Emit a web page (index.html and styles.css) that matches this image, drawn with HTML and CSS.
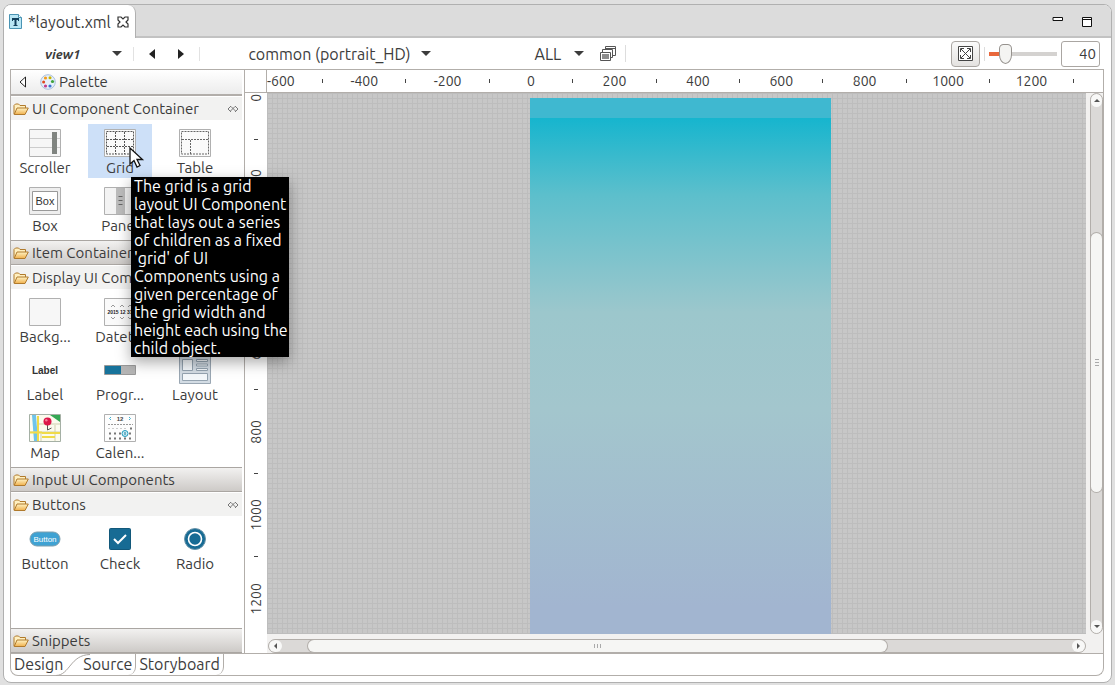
FILE: index.html
```html
<!DOCTYPE html>
<html lang="en">
<head>
<meta charset="utf-8">
<title>layout.xml</title>
<link rel="stylesheet" href="styles.css">
</head>
<body>
<svg class="defs" width="0" height="0" aria-hidden="true">
  <defs>
    <linearGradient id="folder-fill" x1="0" y1="0" x2="0" y2="1"><stop offset="0" stop-color="#fff3c4"/><stop offset="1" stop-color="#f0b04c"/></linearGradient>
    <symbol id="folder" viewBox="0 0 16 14">
      <path d="M1 12V3.5L2.500 2h3L7 3.500h5.500V6" fill="#fff0c0" stroke="#b07a2c"/>
      <path d="M1.200 12.500L4 6h11.300L12 12.500z" fill="url(#folder-fill)" stroke="#b07a2c"/>
    </symbol>
    <symbol id="pin" viewBox="0 0 12 10">
      <path d="M4 2L1 5l3 3M8 2l3 3-3 3M4 2.500L8.500 7M8 2.500L3.500 7" fill="none" stroke="#777"/>
    </symbol>
  </defs>
</svg>
<div class="window">
  <header class="tabbar">
    <div class="file-tab">
      <svg width="13" height="15" viewBox="0 0 13 15"><path d="M.5.5h9l3 3v11H.5z" fill="#b9e6f5" stroke="#4a94b4"/><path d="M9.500.5v3h3" fill="#fff" stroke="#4a94b4"/><path d="M3 5h7M6.500 5v7" stroke="#123f5c" stroke-width="2" fill="none"/><path d="M3.500 4v3M9.500 4v3M4.500 11.500h4" stroke="#123f5c"/></svg>
      <span>*layout.xml</span>
      <button class="plain" aria-label="Close"><svg width="12" height="12" viewBox="0 0 12 12"><path d="M1 1h3l2 2 2-2h3v3L9 6l2 2v3H8L6 9l-2 2H1V8l2-2-2-2z" fill="#fff" stroke="#333" stroke-width="1.200"/></svg></button>
    </div>
    <div class="window-buttons">
      <button class="plain" aria-label="Minimize"><svg width="12" height="12" viewBox="0 0 12 12"><path d="M1 1.500h9.500v3H1z" fill="#fff" stroke="#111"/></svg></button>
      <button class="plain" aria-label="Maximize"><svg width="12" height="12" viewBox="0 0 12 12"><path d="M1.500 1.500h9v9h-9zM1.500 3.500h9" fill="#fff" stroke="#111"/></svg></button>
    </div>
  </header>

  <div class="toolbar">
    <button class="plain pick view-pick"><b>view1</b><i class="caret"></i></button>
    <div class="nav">
      <button class="plain" aria-label="Previous view"><i class="arrow-left"></i></button>
      <button class="plain" aria-label="Next view"><i class="arrow-right"></i></button>
    </div>
    <button class="plain pick">common (portrait_HD)<i class="caret"></i></button>
    <button class="plain pick all-pick">ALL<i class="caret"></i></button>
    <button class="plain layers" aria-label="Screens"><svg width="18" height="17" viewBox="0 0 18 17"><path d="M6.500 1.500h10v9h-10z" fill="#fff" stroke="#555"/><path d="M7 3.500h9" stroke="#555"/><path d="M3.500 4.500h10v8h-10z" fill="#fff" stroke="#555"/><path d="M1.500 7.500h10v8h-10z" fill="#fff" stroke="#555"/><path d="M3 9h7v5H3z" fill="#8c8c8c"/></svg></button>
    <div class="zoom">
      <button class="fit" aria-label="Fit to window"><svg width="15" height="15" viewBox="0 0 15 15"><path d="M.5.5h14v14H.5z" fill="#fff" stroke="#444"/><path d="M3 3l9 9M12 3l-9 9M2.500 6V2.500H6M9 2.500h3.500V6M12.500 9v3.500H9M6 12.500H2.500V9" fill="none" stroke="#444"/></svg></button>
      <span class="rule"></span>
      <input class="slider" type="range" min="0" max="100" value="18" aria-label="Zoom">
      <input class="percent" type="text" value="40" aria-label="Zoom percent">
    </div>
  </div>

  <main class="editor">
    <aside class="palette">
      <div class="palette-head">
        <button class="plain" aria-label="Collapse palette"><svg width="8" height="12" viewBox="0 0 8 12"><path d="M6.500 1v10L1 6z" fill="#fff" stroke="#222"/></svg></button>
        <svg width="16" height="16" viewBox="0 0 16 16"><circle cx="8" cy="8" r="7.300" fill="#e6f0fa" stroke="#a9bfdc"/><circle cx="5.500" cy="4" r="1.600" fill="#f29a1c"/><circle cx="10" cy="3.800" r="1.500" fill="#c8b400"/><circle cx="3.600" cy="8" r="1.500" fill="#e0481c"/><circle cx="12.500" cy="7.500" r="1.600" fill="#3fa33c"/><circle cx="5.500" cy="12" r="1.600" fill="#c13b8c"/><circle cx="10" cy="12" r="1.600" fill="#3b74d0"/></svg>
        <span>Palette</span>
      </div>

      <button class="drawer open"><svg width="16" height="14"><use href="#folder"/></svg><span>UI Component Container</span><svg class="pin" width="12" height="10"><use href="#pin"/></svg></button>
      <div class="items">
        <button class="item"><svg width="32" height="28" viewBox="0 0 32 28"><path d="M.5.5h31v27H.5z" fill="#f6f6f6" stroke="#b0b0b0"/><path d="M1 9.500h30M1 18.500h30" stroke="#ccc"/><path d="M23 3h5v22h-5z" fill="#808480"/></svg><span>Scroller</span></button>
        <button class="item selected"><svg width="32" height="28" viewBox="0 0 32 28"><path d="M.5.5h31v27H.5z" fill="#fafafa" stroke="#b0b0b0"/><path d="M2.500 2.500h27v22.500h-27zM11.500 3v22M20.500 3v22M3 10.500h27M3 17.500h27" fill="none" stroke="#555" stroke-dasharray="2 1"/></svg><span>Grid</span></button>
        <button class="item"><svg width="32" height="28" viewBox="0 0 32 28"><path d="M.5.5h31v27H.5z" fill="#fafafa" stroke="#b0b0b0"/><path d="M2.500 2.500h27v22.500h-27zM11.500 11v14M3 10.500h27" fill="none" stroke="#666" stroke-dasharray="2 1"/></svg><span>Table</span></button>
        <button class="item"><svg width="32" height="28" viewBox="0 0 32 28"><path d="M.5.5h31v27H.5z" fill="#eee" stroke="#b0b0b0"/><path d="M3.500 4.500h25v19h-25z" fill="#fff" stroke="#999"/><text x="16" y="18" class="t-box">Box</text></svg><span>Box</span></button>
        <button class="item"><svg width="32" height="28" viewBox="0 0 32 28"><path d="M.5.5h31v27H.5z" fill="#f3f3f3" stroke="#b0b0b0"/><path d="M12 1h9v26h-9z" fill="#bcbcbc"/><path d="M14.500 9.500h4M14.500 13.500h4M14.500 17.500h4" stroke="#666"/></svg><span>Panel</span></button>
      </div>

      <button class="drawer closed"><svg width="16" height="14"><use href="#folder"/></svg><span>Item Container</span></button>

      <button class="drawer open"><svg width="16" height="14"><use href="#folder"/></svg><span>Display UI Components</span><svg class="pin" width="12" height="10"><use href="#pin"/></svg></button>
      <div class="items">
        <button class="item"><svg width="32" height="28" viewBox="0 0 32 28"><path d="M.5.5h31v27H.5z" fill="#f7f7f7" stroke="#b0b0b0"/></svg><span>Backg...</span></button>
        <button class="item"><svg width="32" height="28" viewBox="0 0 32 28"><path d="M.5.5h31v27H.5z" fill="#fafafa" stroke="#b0b0b0"/><path d="M7 9l2-2 2 2M16 9l2-2 2 2M24 9l2-2 2 2M7 19l2 2 2-2M16 19l2 2 2-2M24 19l2 2 2-2" fill="none" stroke="#999"/><text x="16" y="16" class="t-date">2015 12 31</text></svg><span>Datet...</span></button>
        <button class="item"></button>
        <button class="item"><svg width="32" height="28" viewBox="0 0 32 28"><text x="16" y="18" class="t-label">Label</text></svg><span>Label</span></button>
        <button class="item"><svg width="32" height="28" viewBox="0 0 32 28"><path d="M.5 9.500h31v9H.5z" fill="#b5b5b5" stroke="#999"/><path d="M1 10h16v8H1z" fill="#17739b"/></svg><span>Progr...</span></button>
        <button class="item"><svg width="32" height="28" viewBox="0 0 32 28"><path d="M.5.5h31v27H.5z" fill="#d3dce4" stroke="#9aa7b3"/><path d="M3.500 3.500h10v11h-10zM17.500 3.500h11v2h-11zM17.500 8h11v2h-11zM17.500 12.500h11v2h-11zM3.500 17.500h25v7h-25z" fill="#f3f7fa" stroke="#94a3b0"/></svg><span>Layout</span></button>
        <button class="item"><svg width="32" height="28" viewBox="0 0 32 28"><path d="M.5.5h31v27H.5z" fill="#fbfbee" stroke="#a5b0a5"/><path d="M3 1h4l2 26H5z" fill="#6fc4ea"/><path d="M21 1h10v7z" fill="#35a854"/><path d="M9 10h22M1 18h30M12 18v9M26 11v16" stroke="#cfcfae"/><path d="M1 18.500h12M13 19h18M9 27V2M13 23h13" stroke="#f0db48" stroke-width="2" fill="none"/><path d="M18.500 10v6l4-2" stroke="#555" fill="none"/><circle cx="18.500" cy="7.500" r="4" fill="#dc1648"/><circle cx="17.300" cy="6.300" r="1.200" fill="#f77b98"/></svg><span>Map</span></button>
        <button class="item"><svg width="32" height="28" viewBox="0 0 32 28"><path d="M.5.5h31v27H.5z" fill="#fdfdfd" stroke="#b0b0b0"/><text x="16" y="7" class="t-month">12</text><path d="M7 3L5.500 4.500 7 6M25 3l1.500 1.500L25 6" stroke="#3fb0cf" fill="none"/><path d="M4 10.500h25" stroke="#999" stroke-dasharray="2 1"/><path d="M4 14.500h18" stroke="#ccc" stroke-dasharray="2 2"/><path d="M26 14.500h2M5 19.500h24M5 24.500h24" stroke="#777" stroke-width="2" stroke-dasharray="2 3"/><circle cx="21" cy="19.500" r="3" fill="#ccecf5" stroke="#209cbd"/><path d="M21 18v3" stroke="#167d9b"/></svg><span>Calen...</span></button>
      </div>

      <button class="drawer closed"><svg width="16" height="14"><use href="#folder"/></svg><span>Input UI Components</span></button>

      <button class="drawer open"><svg width="16" height="14"><use href="#folder"/></svg><span>Buttons</span><svg class="pin" width="12" height="10"><use href="#pin"/></svg></button>
      <div class="items grow">
        <button class="item"><svg width="32" height="28" viewBox="0 0 32 28"><rect x="1" y="7" width="30" height="14" rx="7" fill="#3fa2d3" stroke="#7f9fae"/><text x="16" y="17" class="t-button">Button</text></svg><span>Button</span></button>
        <button class="item"><svg width="32" height="28" viewBox="0 0 32 28"><rect x="5.500" y="3.500" width="21" height="21" rx="1" fill="#176b94" stroke="#12587a"/><path d="M10 14l4 4 8-8" fill="none" stroke="#fff" stroke-width="2"/></svg><span>Check</span></button>
        <button class="item"><svg width="32" height="28" viewBox="0 0 32 28"><circle cx="16" cy="14" r="10.500" fill="#176b94" stroke="#6b95aa"/><circle cx="16" cy="14" r="6.500" fill="none" stroke="#fff" stroke-width="1.600"/></svg><span>Radio</span></button>
      </div>

      <button class="drawer closed"><svg width="16" height="14"><use href="#folder"/></svg><span>Snippets</span></button>
    </aside>

    <section class="stage">
      <div class="corner"></div>
      <div class="ruler-x"><div class="marks">
        <span>-600</span><i></i><span>-400</span><i></i><span>-200</span><i></i><span>0</span><i></i><span>200</span><i></i><span>400</span><i></i><span>600</span><i></i><span>800</span><i></i><span>1000</span><i></i><span>1200</span><i></i>
      </div></div>
      <div class="ruler-y"><div class="marks">
        <span>0</span><i></i><span>200</span><i></i><span>400</span><i></i><span>600</span><i></i><span>800</span><i></i><span>1000</span><i></i><span>1200</span>
      </div></div>
      <div class="canvas"><div class="screen"><div class="status"></div></div></div>
      <div class="scroll-y">
        <button class="plain cap" aria-label="Scroll up"><i class="tiny-up"></i></button>
        <div class="track"><div class="thumb"><i></i><i></i><i></i></div></div>
        <button class="plain cap" aria-label="Scroll down"><i class="tiny-down"></i></button>
      </div>
      <div class="scroll-x">
        <button class="plain cap" aria-label="Scroll left"><i class="tiny-left"></i></button>
        <div class="track"><div class="thumb"><i></i><i></i><i></i></div></div>
        <button class="plain cap" aria-label="Scroll right"><i class="tiny-right"></i></button>
      </div>
    </section>
  </main>

  <nav class="pages">
    <a href="#design">Design</a>
    <svg class="slope" width="34" height="22" viewBox="0 0 34 22"><path d="M0 21.500C14 21 14 1 34 .5" fill="none" stroke="#aaa6a2"/></svg>
    <a href="#source" class="edge">Source</a>
    <a href="#storyboard" class="edge">Storyboard</a>
  </nav>
</div>

<div class="tooltip" role="tooltip">The grid is a grid<br>layout UI Component<br>that lays out a series<br>of children as a fixed<br>'grid' of UI<br>Components using a<br>given percentage of<br>the grid width and<br>height each using the<br>child object.</div>
<svg class="pointer" width="16" height="22" viewBox="0 0 16 22"><path d="M1 1v16l4-3.500 3 6.500 3-1.500-3-6h5.500z" fill="#fff" stroke="#111" stroke-width="1.300"/></svg>
</body>
</html>
```
FILE: styles.css
```css
* { box-sizing: border-box; }

body {
  margin: 0;
  height: 100vh;
  padding: 4px 3px 2px;
  display: flex;
  background: #e0e0e0;
  color: #3c3c3c;
  font: 15px/18px Ubuntu, "Noto Sans", sans-serif;
  overflow: hidden;
}

button, input { font: inherit; color: inherit; }
svg { display: block; flex: none; }
.defs { position: absolute; }
.plain { border: 0; padding: 0; background: none; display: flex; align-items: center; }

.window {
  flex: 1;
  min-width: 0;
  display: flex;
  flex-direction: column;
  background: #fff;
  border: 1px solid #b0b0b0;
  border-radius: 8px;
  overflow: hidden;
}

/* Title tabs */
.tabbar {
  height: 33px;
  flex: none;
  display: flex;
  justify-content: space-between;
  background: #dcdcdc;
  box-shadow: inset 0 -2px #c2c2c2;
}
.file-tab {
  display: flex;
  align-items: center;
  gap: 6px;
  padding: 0 6px 0 5px;
  background: #fff;
  border-right: 1px solid #b0b0b0;
  border-radius: 0 8px 0 0;
  font-size: 16px;
}
.window-buttons { display: flex; align-items: center; gap: 17px; padding-right: 18px; }

/* Toolbar */
.toolbar { height: 31px; flex: none; display: flex; align-items: center; padding: 0 11px 0 41px; font-size: 16px; }
.pick { gap: 10px; }
.caret { border: 5px solid transparent; border-top-color: #3c3c3c; border-bottom: 0; }
.view-pick { gap: 32px; }
.view-pick b { font-size: 13px; font-style: italic; }
.nav {
  display: flex;
  gap: 23px;
  padding: 0 15px;
  margin: 0 48px 0 11px;
  border: 1px solid #e2e2e2;
  border-width: 0 1px;
  height: 14px;
}
.arrow-left { border: 5px solid transparent; border-right: 6px solid #222; border-left: 0; }
.arrow-right { border: 5px solid transparent; border-left: 6px solid #222; border-right: 0; }
.all-pick { margin-left: 104px; gap: 13px; }
.layers { margin-left: 15px; padding-right: 8px; border-right: 1px solid #ddd; }
.zoom { margin-left: auto; display: flex; align-items: center; gap: 4px; }
.rule { width: 1px; height: 14px; background: #ddd; }
.fit {
  width: 29px;
  height: 26px;
  display: grid;
  place-items: center;
  padding: 0;
  border: 1px solid #aaa6a2;
  border-radius: 4px;
  background: linear-gradient(#fafafa, #e4e2e0);
}
.slider { appearance: none; width: 68px; height: 22px; margin: 0; background: linear-gradient(90deg, #e9683c 16px, #d4d2d0 16px) center / 100% 4px no-repeat; }
.slider::-webkit-slider-thumb {
  appearance: none;
  width: 13px;
  height: 20px;
  border: 1px solid #96928e;
  border-radius: 5px 5px 7px 7px / 5px 5px 10px 10px;
  background: #f4f4f2;
}
.percent { width: 39px; height: 26px; padding: 0 3px; text-align: right; border: 1px solid #aaa6a2; border-radius: 3px; background: #fff; font-size: 15px; }

/* Editor */
.editor {
  flex: 1;
  min-height: 0;
  display: flex;
  margin: 0 7px 0 6px;
  border: 1px solid #b2aeaa;
}
.palette { width: 234px; flex: none; display: flex; flex-direction: column; padding-right: 2px; border-right: 1px solid #b2aeaa; }
.palette-head { height: 26px; flex: none; display: flex; align-items: center; gap: 6px; padding-left: 8px; background: linear-gradient(#fff, #ececec); border-bottom: 2px solid #b2aeaa; }
.palette-head svg + span { margin-left: -3px; }
.palette-head .plain { margin-right: 7px; }
.drawer { flex: none; display: flex; align-items: center; gap: 3px; border: 0; padding: 0 3px 0 2px; text-align: left; white-space: nowrap; }
.drawer span { flex: 1; }
.open { height: 24px; background: #f2f2f1; border-top: 1px solid #fff; }
.closed { height: 25px; padding-top: 1px; background: linear-gradient(#f2f1f0, #cdcac7); border-top: 1px solid #aaa6a2; border-bottom: 1px solid #aaa6a2; }
.items { display: grid; grid-template-columns: repeat(3, 64px); grid-auto-rows: 54px; gap: 4px 11px; padding: 4px 2px; align-content: start; }
.grow { flex: 1; min-height: 0; }
.item { display: flex; flex-direction: column; align-items: center; gap: 2px; padding: 5px 0 0; border: 0; background: none; white-space: nowrap; }
.selected { background: #cde0f8; }

.t-box { font: 11px "Liberation Sans", sans-serif; text-anchor: middle; fill: #333; }
.t-date { font: bold 5px "Liberation Sans", sans-serif; text-anchor: middle; fill: #222; }
.t-label { font: bold 10px "Liberation Sans", sans-serif; text-anchor: middle; fill: #333; }
.t-month { font: bold 6px "Liberation Sans", sans-serif; text-anchor: middle; fill: #444; }
.t-button { font: 8px "Liberation Sans", sans-serif; text-anchor: middle; fill: #fff; }

/* Rulers and canvas */
.stage {
  flex: 1;
  min-width: 0;
  display: grid;
  grid-template: 23px minmax(0, 1fr) 19px / 22px minmax(0, 1fr) 17px;
  background: #f2f1f0;
}
.corner { background: #fff; border: 1px solid #b2aeaa; border-width: 0 1px 1px 0; }
.ruler-x, .ruler-y { overflow: hidden; background: #fff; font-size: 14px; }
.ruler-x { grid-column: 2 / 4; padding-right: 17px; border-bottom: 1px solid #b2aeaa; }
.ruler-x .marks { height: 22px; margin: 0 -8px 0 -7px; display: grid; grid-template-columns: repeat(20, minmax(0, 1fr)); }
.ruler-y { grid-row: 2 / 4; padding-bottom: 19px; }
.ruler-y .marks { height: calc(100% + 43px); margin-top: -16px; display: grid; grid-template-rows: repeat(14, minmax(0, 1fr)); }
.marks > * { display: flex; align-items: center; justify-content: center; white-space: nowrap; }
.marks i::before { content: ""; background: #444; }
.ruler-x i::before { width: 1px; height: 4px; }
.ruler-y i::before { width: 4px; height: 1px; }
.ruler-y span { writing-mode: vertical-rl; transform: rotate(180deg); }

.canvas {
  background-color: #c7c7c7;
  background-image: linear-gradient(90deg, #bdbdbd 1px, transparent 1px), linear-gradient(#bdbdbd 1px, transparent 1px);
  background-size: 5px 5px;
  padding: 5px 255px 0 263px;
}
.screen { height: 100%; background: linear-gradient(#16b5ce 20px, #5cbfcc 18%, #9cc7cc 40%, #a3c6cd 58%, #a2b5d0 95%); }
.status { height: 20px; background: #3fb8d0; }

.scroll-y, .scroll-x { display: flex; border: 1px solid #b2aeaa; border-radius: 8px; background: #dbd9d7; overflow: hidden; }
.scroll-y { flex-direction: column; margin: 0 0 0 4px; }
.scroll-x { grid-column: 2; margin: 5px 0 0 1px; }
.track { flex: 1; display: flex; min-width: 0; min-height: 0; }
.cap { flex: none; justify-content: center; background: #f8f8f7; border-radius: 7px; }
.scroll-y .cap { height: 13px; }
.scroll-x .cap { width: 13px; }
.scroll-y .track { flex-direction: column; padding: 126px 0 128px; }
.scroll-x .track { padding: 0 185px 0 26px; }
.thumb { flex: 1; display: flex; align-items: center; justify-content: center; gap: 2px; background: #f6f6f4; border-radius: 7px; box-shadow: 0 0 0 1px #b2aeaa; }
.scroll-y .thumb { flex-direction: column; }
.thumb i { background: #aaa; }
.scroll-y .thumb i { width: 4px; height: 1px; }
.scroll-x .thumb i { width: 1px; height: 4px; }
.tiny-up { border: 3px solid transparent; border-bottom-color: #555; border-top: 0; }
.tiny-down { border: 3px solid transparent; border-top-color: #555; border-bottom: 0; }
.tiny-left { border: 3px solid transparent; border-right-color: #555; border-left: 0; }
.tiny-right { border: 3px solid transparent; border-left-color: #555; border-right: 0; }

/* Page tabs */
.pages {
  height: 22px;
  flex: none;
  display: flex;
  margin: 0 7px 6px 6px;
  border: 1px solid #b2aeaa;
  border-top: 0;
  border-radius: 0 0 8px 8px;
  font-size: 16px;
}
.pages a { color: inherit; text-decoration: none; padding: 1px 3px 0; }
.slope { margin: 0 -10px; }
.edge { border-right: 1px solid #b2aeaa; border-radius: 0 0 8px 0; }

.tooltip {
  position: absolute;
  left: 131px;
  top: 177px;
  width: 158px;
  padding-left: 3px;
  background: #000;
  color: #fff;
  font-size: 16px;
  white-space: nowrap;
  box-shadow: 0 5px 14px rgba(0, 0, 0, .35);
}
.pointer { position: absolute; left: 129px; top: 147px; }
```
